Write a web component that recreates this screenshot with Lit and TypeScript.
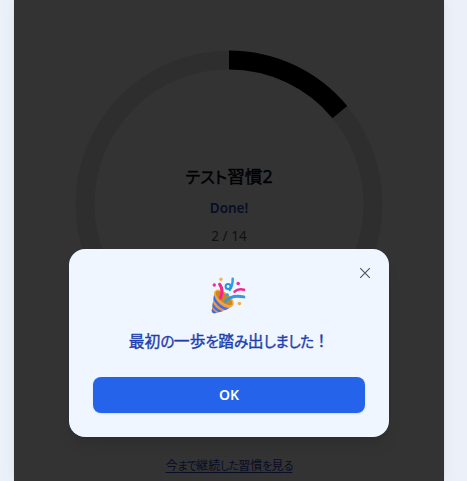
import { LitElement, html, css } from "lit";
import { customElement, property } from "lit/decorators.js";

@customElement("progress-ring")
class ProgressRing extends LitElement {
  @property({ type: Number }) percent = 0;

  static styles = css`
    :host { display: grid; width: 320px; height: 320px; }
    svg, .label { grid-area: 1 / 1; }
    .label { display: flex; flex-direction: column; align-items: center; }
  `;

  render() {
    return html`
      <svg viewBox="0 0 100 100" width="320" height="320">
        <circle cx="50" cy="50" r="45" fill="none" stroke="#e5e7eb" stroke-width="6"></circle>
        <circle cx="50" cy="50" r="45" fill="none" stroke="#000" stroke-width="6"
          pathLength="100" stroke-dasharray="${this.percent} 100" transform="rotate(-90 50 50)"></circle>
      </svg>
      <div class="label"><slot></slot></div>
    `;
  }
}

@customElement("party-popper")
class PartyPopper extends LitElement {
  static styles = css`
    :host { display: block; width: 36px; height: 38px; }
    svg { display: block; }
  `;

  render() {
    return html`
      <svg width="36" height="38" viewBox="0 0 36 38" fill="none" stroke-linecap="round">
        <defs>
          <clipPath id="cone"><path d="M3.5 14.5C8 20 14 28 22.5 27.5C22 31 6 36.5 3 36.3C1 36.2 .6 35 .8 33Z"/></clipPath>
          <linearGradient id="gold" x1="0" y1="0" x2="1" y2="1">
            <stop offset="0" stop-color="#e9a548"/><stop offset="1" stop-color="#ee8c50"/>
          </linearGradient>
        </defs>
        <g clip-path="url(#cone)">
          <rect width="26" height="38" fill="url(#gold)"/>
          <path d="M2 18.5C4 25.5 10 31.5 18.5 33M0 24.5C2 30 7 34.5 13 36M-1 31C1 34 4 36.5 7 38" stroke="#3b70e8" stroke-width="2.5"/>
        </g>
        <ellipse cx="13" cy="21.2" rx="10.9" ry="5" transform="rotate(39 13 21.2)" fill="#cc881c" stroke="#f2ad45" stroke-width="1.4"/>
        <path d="M8.7 7.4C11.3 11 11.8 15.5 9.6 20.8" stroke="#f3268f" stroke-width="3.2"/>
        <path d="M21.7 1.8C21.8 6.3 20.6 10.2 18.8 12.9" stroke="#2ba3e5" stroke-width="2.5"/>
        <circle cx="17.1" cy="9.5" r="2.5" stroke="#2497df" stroke-width="2.1"/>
        <path d="M14.5 24.4C18 20.2 25 18.3 32.8 19.9" stroke="#3599de" stroke-width="3"/>
        <path d="M23.6 14.6C26 12.4 29 11.7 33 12.8" stroke="#f3268f" stroke-width="2.6"/>
        <circle cx="10" cy="2.2" r="1.7" fill="#efb64e"/>
        <circle cx="3.3" cy="8" r="1.7" fill="#ee2f9c"/>
        <circle cx="27.2" cy="6.5" r="1.8" fill="#ed2bb0"/>
        <circle cx="16.3" cy="17.8" r="1.6" fill="#2aa8e6"/>
        <circle cx="28.4" cy="26.6" r="1.8" fill="#efb04e"/>
      </svg>
    `;
  }
}

/* Sets runs of kana tighter than the kanji around them. */
const tightenKana = (text: string) =>
  text.split(/([ぁ-ヿ]+)/).filter(Boolean).map((run) =>
    /^[ぁ-ヿ]/.test(run) ? html`<span class="kana">${run}</span>` : run);

@customElement("app-root")
class AppRoot extends LitElement {
  static styles = css`
    :host {
      display: block; height: 481px; overflow: hidden; background: #ebf0f9;
      font-family: "Noto Sans", "Noto Sans CJK JP", sans-serif;
    }
    .kana { font-size: .92em; letter-spacing: -.085em; font-feature-settings: "palt"; }
    .title .kana { letter-spacing: 0; }
    .message .kana { letter-spacing: -.035em; }
    .panel {
      position: relative; box-sizing: border-box; width: 430px; height: 481px;
      margin-left: 14px; padding-top: 44px; background: #fff;
      display: flex; flex-direction: column; align-items: center;
      box-shadow: 0 0 15px rgba(0, 0, 0, .05), 0 0 2px rgba(0, 0, 0, .08);
    }
    .title { margin-top: 118px; font-size: 17.6px; line-height: 28px; -webkit-text-stroke: .45px; color: #030712; white-space: nowrap; }
    .done { margin-top: 7px; font-size: 13.5px; line-height: 20px; font-weight: 600; color: #2149b5; }
    .count { margin-top: 8px; font-size: 13.6px; line-height: 20px; color: #4b5563; }
    .link { margin-top: 94px; font-size: 12px; line-height: 16px; color: #1e44b4; text-decoration: underline; text-underline-offset: 2px; white-space: nowrap; }
    .overlay {
      position: absolute; inset: 0; background: rgba(0, 0, 0, .8);
      display: flex; justify-content: center; align-items: flex-start;
    }
    .dialog {
      position: relative; box-sizing: border-box; width: 320px; height: 188px;
      margin-top: 249px; padding: 28px 24px 24px; border-radius: 16px; background: #eff6ff;
      box-shadow: 0 10px 15px -3px rgba(0, 0, 0, .1), 0 4px 6px -4px rgba(0, 0, 0, .1);
      display: flex; flex-direction: column; align-items: center;
    }
    .close { position: absolute; top: 18px; right: 18px; width: 12px; height: 12px; padding: 0; border: 0; background: none; }
    .close svg { display: block; }
    .message { margin: 12px 0 0; font-size: 15.8px; line-height: 28px; -webkit-text-stroke: .4px; color: #1e40af; white-space: nowrap; }
    .ok {
      margin-top: 22px; width: 272px; height: 36px; flex: none; border: 0; padding: 0; border-radius: 8px;
      background: #2563eb; color: #fff; font: 600 14px/20px "Noto Sans", sans-serif;
      box-shadow: 0 1px 2px rgba(0, 0, 0, .1);
    }
  `;

  render() {
    return html`
      <main class="panel">
        <progress-ring percent="14">
          <div class="title">${tightenKana("テスト習慣2")}</div>
          <div class="done">Done!</div>
          <div class="count">2 / 14</div>
        </progress-ring>
        <a class="link">${tightenKana("今まで継続した習慣を見る")}</a>
        <div class="overlay">
          <section class="dialog" role="dialog">
            <button class="close" aria-label="閉じる">
              <svg width="12" height="12" viewBox="0 0 12 12"><path d="M1.2 1.2L10.8 10.8M10.8 1.2L1.2 10.8" stroke="#535960" stroke-width="1.2"/></svg>
            </button>
            <party-popper></party-popper>
            <p class="message">${tightenKana("最初の一歩を踏み出しました！")}</p>
            <button class="ok">OK</button>
          </section>
        </div>
      </main>
    `;
  }
}
